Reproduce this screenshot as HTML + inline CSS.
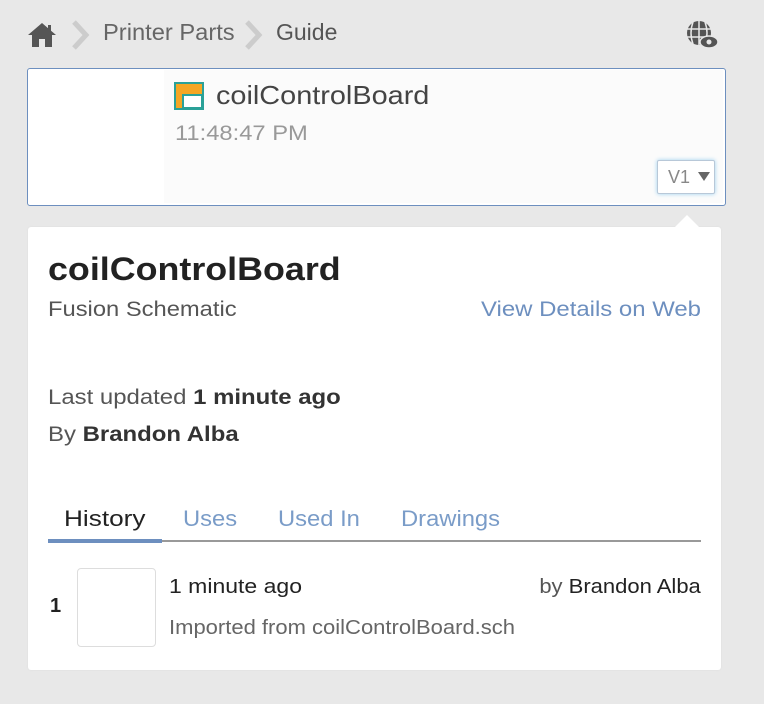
<!DOCTYPE html>
<html><head><style>
body{margin:0;width:764px;height:704px;background:#e8e8e8;font-family:"Liberation Sans",sans-serif;position:relative;overflow:hidden}
.a{position:absolute;white-space:nowrap}
.s{transform:scaleX(1.13);transform-origin:left top}
.r{transform:scaleX(1.1);transform-origin:right top}
</style></head><body>
<svg class="a" style="left:27px;top:22px" width="30" height="26" viewBox="0 0 30 26"><path d="M15 1 L1 13 L5 13 L5 25 L12 25 L12 17 L18 17 L18 25 L25 25 L25 13 L29 13 Z" fill="#555"/><rect x="21" y="3" width="3" height="6" fill="#555"/></svg>
<svg class="a" style="left:71px;top:20px" width="20" height="30"><path d="M3 2 L15 15 L3 28" stroke="#ccc" stroke-width="5" fill="none"/></svg>
<div class="a" style="left:103px;top:19px;font-size:23px;color:#666;transform:scaleX(1.03);transform-origin:left">Printer Parts</div>
<svg class="a" style="left:244px;top:20px" width="20" height="30"><path d="M3 2 L15 15 L3 28" stroke="#ccc" stroke-width="5" fill="none"/></svg>
<div class="a" style="left:276px;top:19px;font-size:23px;color:#555">Guide</div>
<svg class="a" style="left:685px;top:19px" width="36" height="32" viewBox="0 0 36 32"><circle cx="14" cy="14" r="12" fill="#555"/><path d="M2 10H26M2 18H26M14 2V26M8 3Q4 14 8 25M20 3Q24 14 20 25" stroke="#e8e8e8" stroke-width="1.5" fill="none"/><ellipse cx="24" cy="23" rx="9" ry="6" fill="#555" stroke="#e8e8e8" stroke-width="1.5"/><circle cx="24" cy="23" r="2.5" fill="#e8e8e8"/></svg>
<div class="a" style="left:27px;top:68px;width:697px;height:136px;border:1px solid #6d8fbf;border-radius:3px;background:#fff"></div>
<div class="a" style="left:164px;top:70px;width:559px;height:133px;background:#fbfbfb"></div>
<svg class="a" style="left:174px;top:82px" width="30" height="28"><rect x="1" y="1" width="28" height="26" fill="#f5a623" stroke="#2aa198" stroke-width="2"/><rect x="9" y="13" width="19" height="13" fill="#fff" stroke="#2aa198" stroke-width="2"/></svg>
<div class="a s" style="left:216px;top:80px;font-size:26px;color:#444;transform:scaleX(1.11)">coilControlBoard</div>
<div class="a s" style="left:175px;top:122px;font-size:21px;color:#999">11:48:47 PM</div>
<div class="a" style="left:657px;top:160px;width:56px;height:32px;border:1px solid #b8c8d8;box-shadow:0 0 4px #9cd0f0;background:#fff;border-radius:2px"></div>
<div class="a" style="left:668px;top:167px;font-size:18px;color:#888">V1</div>
<svg class="a" style="left:698px;top:172px" width="12" height="10"><path d="M0 0H12L6 9Z" fill="#666"/></svg>
<div class="a" style="left:28px;top:227px;width:693px;height:443px;background:#fff;border-radius:3px;box-shadow:0 0 2px #ddd"></div>
<svg class="a" style="left:674px;top:214px" width="26" height="14"><path d="M0 14L13 1L26 14Z" fill="#fff"/></svg>
<div class="a s" style="left:48px;top:251px;font-size:32px;font-weight:bold;color:#222;transform:scaleX(1.12)">coilControlBoard</div>
<div class="a s" style="left:48px;top:298px;font-size:21px;color:#555">Fusion Schematic</div>
<div class="a r" style="right:63px;top:298px;font-size:21px;color:#6d8fbf;transform:scaleX(1.14)">View Details on Web</div>
<div class="a s" style="left:48px;top:386px;font-size:21px;color:#555;transform:scaleX(1.14)">Last updated <b style="color:#333">1 minute ago</b></div>
<div class="a s" style="left:48px;top:423px;font-size:21px;color:#555;transform:scaleX(1.14)">By <b style="color:#333">Brandon Alba</b></div>
<div class="a s" style="left:64px;top:506px;font-size:22px;color:#222;transform:scaleX(1.19)">History</div>
<div class="a s" style="left:183px;top:506px;font-size:22px;color:#7a9cc8;transform:scaleX(1.08)">Uses</div>
<div class="a s" style="left:278px;top:506px;font-size:22px;color:#7a9cc8;transform:scaleX(1.08)">Used In</div>
<div class="a s" style="left:401px;top:506px;font-size:22px;color:#7a9cc8;transform:scaleX(1.08)">Drawings</div>
<div class="a" style="left:48px;top:540px;width:653px;height:2px;background:#999"></div>
<div class="a" style="left:48px;top:539px;width:114px;height:4px;background:#6d8fbf"></div>
<div class="a" style="left:50px;top:595px;font-size:20px;font-weight:bold;color:#222">1</div>
<div class="a" style="left:77px;top:568px;width:77px;height:77px;border:1px solid #ddd;border-radius:4px"></div>
<div class="a s" style="left:169px;top:576px;font-size:20px;color:#222;transform:scaleX(1.15)">1 minute ago</div>
<div class="a r" style="right:63px;top:576px;font-size:20px;color:#555">by <span style="color:#222">Brandon Alba</span></div>
<div class="a s" style="left:169px;top:617px;font-size:20px;color:#666;transform:scaleX(1.1)">Imported from coilControlBoard.sch</div>
</body></html>
